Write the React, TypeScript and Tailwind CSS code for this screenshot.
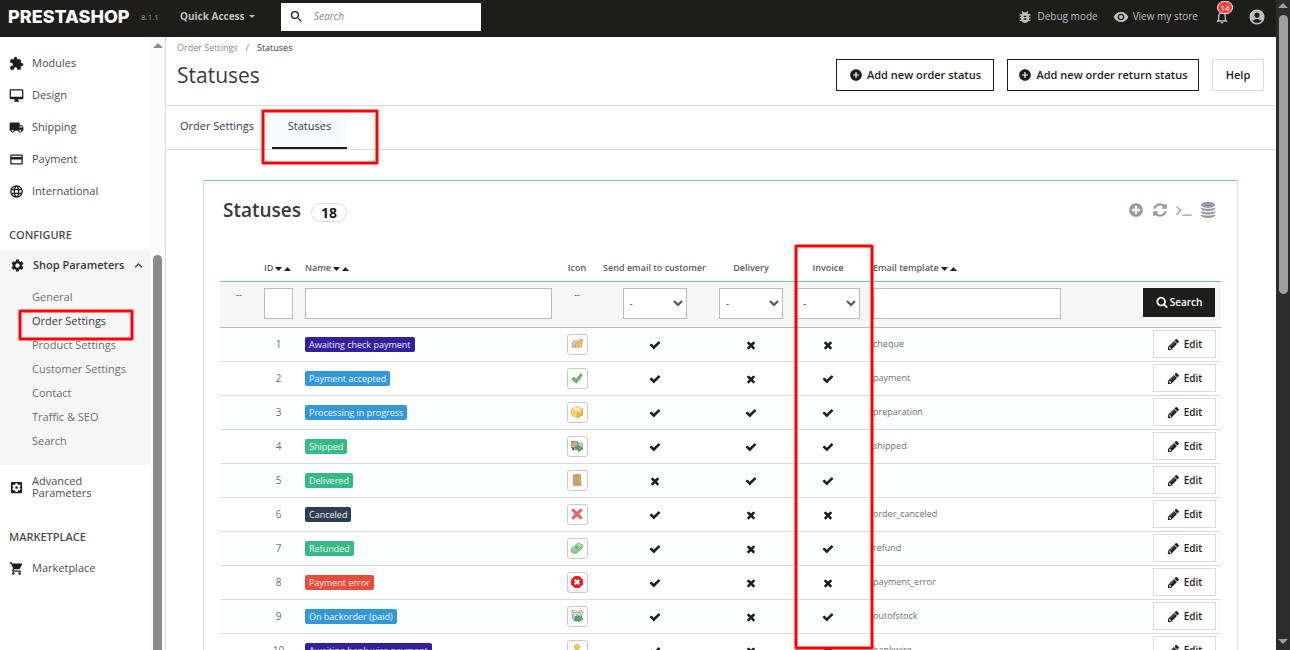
import type { ReactNode } from 'react';
import type { IconType } from 'react-icons';
import {
  MdAccountCircle,
  MdAddCircle,
  MdBugReport,
  MdCreditCard,
  MdExtension,
  MdKeyboardArrowUp,
  MdLanguage,
  MdLocalShipping,
  MdNotificationsNone,
  MdOutlineDesktopMac,
  MdRemoveRedEye,
  MdSearch,
  MdSettings,
  MdSettingsApplications,
  MdShoppingCart,
} from 'react-icons/md';

// ---------------------------------------------------------------------------
// Glyphs used by the legacy list (1792 grid)
// ---------------------------------------------------------------------------
const GLYPHS = {
  check:
    'M1671 566q0 40-28 68l-724 724-136 136q-28 28-68 28t-68-28l-136-136-362-362q-28-28-28-68t28-68l136-136q28-28 68-28t68 28l294 295 656-657q28-28 68-28t68 28l136 136q28 28 28 68z',
  times:
    'M1490 1322q0 40-28 68l-136 136q-28 28-68 28t-68-28l-294-294-294 294q-28 28-68 28t-68-28l-136-136q-28-28-28-68t28-68l294-294-294-294q-28-28-28-68t28-68l136-136q28-28 68-28t68 28l294 294 294-294q28-28 68-28t68 28l136 136q28 28 28 68t-28 68l-294 294 294 294q28 28 28 68z',
  plus:
    'M1344 960v-128q0-26-19-45t-45-19h-256v-256q0-26-19-45t-45-19h-128q-26 0-45 19t-19 45v256h-256q-26 0-45 19t-19 45v128q0 26 19 45t45 19h256v256q0 26 19 45t45 19h128q26 0 45-19t19-45v-256h256q26 0 45-19t19-45zm320-64q0 209-103 385.5t-279.5 279.5-385.5 103-385.5-103-279.5-279.5-103-385.5 103-385.5 279.5-279.5 385.5-103 385.5 103 279.5 279.5 103 385.5z',
  refresh:
    'M1639 1056q0 5-1 7-64 268-268 434.5t-478 166.5q-146 0-282.5-55t-243.5-157l-129 129q-19 19-45 19t-45-19-19-45v-448q0-26 19-45t45-19h448q26 0 45 19t19 45-19 45l-137 137q71 66 161 102t187 36q134 0 250-65t186-179q11-17 53-117 8-23 30-23h192q13 0 22.5 9.5t9.5 22.5zm25-800v448q0 26-19 45t-45 19h-448q-26 0-45-19t-19-45 19-45l138-138q-148-137-349-137-134 0-250 65t-186 179q-11 17-53 117-8 23-30 23h-199q-13 0-22.5-9.5t-9.5-22.5v-7q65-268 270-434.5t480-166.5q146 0 284 55.5t245 156.5l130-129q19-19 45-19t45 19 19 45z',
  terminal:
    'M585 983l-466 466q-10 10-23 10t-23-10l-50-50q-10-10-10-23t10-23l393-393-393-393q-10-10-10-23t10-23l50-50q10-10 23-10t23 10l466 466q10 10 10 23t-10 23zm1176 457v64q0 14-9 23t-23 9h-960q-14 0-23-9t-9-23v-64q0-14 9-23t23-9h960q14 0 23 9t9 23z',
  database:
    'M896 768q237 0 443-43t325-127v170q0 69-103 128t-280 93.5-385 34.5-385-34.5-280-93.5-103-128v-170q119 84 325 127t443 43zm0 768q237 0 443-43t325-127v170q0 69-103 128t-280 93.5-385 34.5-385-34.5-280-93.5-103-128v-170q119 84 325 127t443 43zm0-384q237 0 443-43t325-127v170q0 69-103 128t-280 93.5-385 34.5-385-34.5-280-93.5-103-128v-170q119 84 325 127t443 43zm0-1152q208 0 385 34.5t280 93.5 103 128v128q0 69-103 128t-280 93.5-385 34.5-385-34.5-280-93.5-103-128v-128q0-69 103-128t280-93.5 385-34.5z',
  pencil:
    'M491 1536l91-91-235-235-91 91v107h128v128h107zm523-928q0-22-22-22-10 0-17 7l-542 542q-7 7-7 17 0 22 22 22 10 0 17-7l542-542q7-7 7-17zm-54-192l416 416-832 832h-416v-416zm683 96q0 53-37 90l-166 166-416-416 166-165q36-38 90-38 53 0 91 38l235 234q37 39 37 91z',
  search:
    'M1216 832q0-185-131.5-316.5t-316.5-131.5-316.5 131.5-131.5 316.5 131.5 316.5 316.5 131.5 316.5-131.5 131.5-316.5zm512 832q0 52-38 90t-90 38q-54 0-90-38l-343-342q-179 124-399 124-143 0-273.5-55.5t-225-150-150-225-55.5-273.5 55.5-273.5 150-225 225-150 273.5-55.5 273.5 55.5 225 150 150 225 55.5 273.5q0 220-124 399l343 343q37 37 37 90z',
};

function Glyph({ name, className }: { name: keyof typeof GLYPHS; className: string }) {
  return (
    <svg viewBox="0 0 1792 1792" fill="currentColor" aria-hidden="true" className={className}>
      <path d={GLYPHS[name]} />
    </svg>
  );
}

// ---------------------------------------------------------------------------
// Data
// ---------------------------------------------------------------------------
type MenuItem = { label: string; icon: IconType };

const IMPROVE_MENU: MenuItem[] = [
  { label: 'Modules', icon: MdExtension },
  { label: 'Design', icon: MdOutlineDesktopMac },
  { label: 'Shipping', icon: MdLocalShipping },
  { label: 'Payment', icon: MdCreditCard },
  { label: 'International', icon: MdLanguage },
];

const SHOP_PARAMETERS = [
  'General',
  'Order Settings',
  'Product Settings',
  'Customer Settings',
  'Contact',
  'Traffic & SEO',
  'Search',
];

const BLUE = 'bg-[#3498d8]';
const PURPLE = 'bg-[#34209e]';
const GREEN = 'bg-[#36b985]';

type StatusIcon =
  | 'cheque'
  | 'accepted'
  | 'box'
  | 'truck'
  | 'door'
  | 'cross'
  | 'cash'
  | 'error'
  | 'clock'
  | 'bank';

type Status = {
  id: number;
  name: string;
  color: string;
  icon: StatusIcon;
  email: boolean;
  delivery: boolean;
  invoice: boolean;
  template: string;
};

const STATUSES: Status[] = [
  { id: 1, name: 'Awaiting check payment', color: PURPLE, icon: 'cheque', email: true, delivery: false, invoice: false, template: 'cheque' },
  { id: 2, name: 'Payment accepted', color: BLUE, icon: 'accepted', email: true, delivery: false, invoice: true, template: 'payment' },
  { id: 3, name: 'Processing in progress', color: BLUE, icon: 'box', email: true, delivery: true, invoice: true, template: 'preparation' },
  { id: 4, name: 'Shipped', color: GREEN, icon: 'truck', email: true, delivery: true, invoice: true, template: 'shipped' },
  { id: 5, name: 'Delivered', color: GREEN, icon: 'door', email: false, delivery: true, invoice: true, template: '' },
  { id: 6, name: 'Canceled', color: 'bg-[#2c3e50]', icon: 'cross', email: true, delivery: false, invoice: false, template: 'order_canceled' },
  { id: 7, name: 'Refunded', color: GREEN, icon: 'cash', email: true, delivery: false, invoice: true, template: 'refund' },
  { id: 8, name: 'Payment error', color: 'bg-[#e74c3c]', icon: 'error', email: true, delivery: false, invoice: false, template: 'payment_error' },
  { id: 9, name: 'On backorder (paid)', color: BLUE, icon: 'clock', email: true, delivery: false, invoice: true, template: 'outofstock' },
  { id: 10, name: 'Awaiting bank wire payment', color: PURPLE, icon: 'bank', email: true, delivery: false, invoice: false, template: 'bankwire' },
];

// ---------------------------------------------------------------------------
// Small pieces
// ---------------------------------------------------------------------------
const STATUS_DRAWINGS: Record<StatusIcon, ReactNode> = {
  cheque: (
    <>
      <path d="M3 4h11v8H1z" fill="#d9d9d6" stroke="#8d8d8b" />
      <path d="M3 9h5M4 7h4" stroke="#9fb0c0" />
      <path d="M5 13l1-4 7-8 3 3-7 8z" fill="#f6bf4d" stroke="#c98d33" strokeWidth=".6" />
      <path d="M12.500 2L14 .5l2 2-1 1.500z" fill="#e58a6b" />
    </>
  ),
  accepted: <path d="M1 9l3-2 3 3 6-8 2 2-8 11z" fill="#6fbf63" stroke="#3d9a45" />,
  box: (
    <>
      <path d="M8 0l7.500 4v8L8 16 .5 12V4z" fill="#f2ab35" stroke="#cf9336" strokeWidth=".8" />
      <path d="M8 0l7.500 4L8 8 .5 4z" fill="#fbdf98" />
      <path d="M.5 4L8 8v8L.5 12z" fill="#f9d27c" />
      <path d="M4 2l7.500 4v4" fill="none" stroke="#fff6dc" strokeWidth="1.800" />
    </>
  ),
  truck: (
    <>
      <path d="M0 2h9v8H0z" fill="#e8c8a0" stroke="#8c6a48" />
      <path d="M0 4h9M0 7h9" stroke="#9b7653" />
      <path d="M9 4h5l2 4v3H9z" fill="#bcd6ee" stroke="#5d87b0" />
      <circle cx="3" cy="12" r="1.800" fill="#555" />
      <path d="M6 9h4V7l6 4.500-6 4v-2.500H6z" fill="#5cab4b" stroke="#2f7d2d" strokeWidth=".7" />
    </>
  ),
  door: (
    <>
      <path d="M2 15h13" stroke="#a9a29a" />
      <path d="M3.500 1h9v13.500h-9z" fill="#cf9a5c" stroke="#b9833f" />
      <path d="M5 3h2.500v4H5zM8.500 3H11v4H8.500zM5 9h2.500v4H5zM8.500 9H11v4H8.500z" fill="#d8a970" />
      <circle cx="11.500" cy="8" r="1" fill="#f7e09a" />
    </>
  ),
  cross: (
    <path d="M1 3l2-2 5 4.500L13 1l2 2-4.500 5 4.500 5-2 2-5-4.500L3 15l-2-2 4.500-5z" fill="#f4605f" stroke="#e04848" strokeWidth=".8" />
  ),
  cash: (
    <>
      <path d="M0 9l10-8 6 4-9 8z" fill="#a5d6a0" stroke="#64a865" />
      <path d="M0 10v3l6 3 9-8V6" fill="#8cc78c" stroke="#64a865" />
      <circle cx="8" cy="7" r="2" fill="#6fb771" />
      <path d="M3 9l3 2M10 3l3 2" stroke="#e0f2dc" />
    </>
  ),
  error: (
    <>
      <path d="M5 0h6l5 5v6l-5 5H5l-5-5V5z" fill="#ee1c1c" />
      <path d="M5 5l6 6M11 5l-6 6" stroke="#fff" strokeWidth="3" />
    </>
  ),
  clock: (
    <>
      <path d="M0 5a4 4 0 0 1 6-5zM16 5a4 4 0 0 0-6-5z" fill="#f2b13d" />
      <circle cx="8" cy="8.500" r="6" fill="#e3effa" stroke="#6b9fd2" strokeWidth="1.800" />
      <path d="M8 5v4H5" fill="none" stroke="#666" />
      <path d="M5 9h5V7l6 5-6 4v-2H5z" fill="#5cab4b" stroke="#2f7d2d" strokeWidth=".7" />
    </>
  ),
  bank: (
    <>
      <circle cx="8" cy="4" r="3.500" fill="#f5c94f" stroke="#d9a52e" />
      <path d="M3 16V9h10v7z" fill="#f5d46f" stroke="#d9a52e" />
    </>
  ),
};

function StatusImage({ icon }: { icon: StatusIcon }) {
  return (
    <span className="inline-flex size-[21px] items-center justify-center rounded-[3px] border border-[#c9c9c9] bg-white align-middle">
      <svg viewBox="0 0 16 16" className="size-3" aria-hidden="true">
        {STATUS_DRAWINGS[icon]}
      </svg>
    </span>
  );
}

function Flag({ on }: { on: boolean }) {
  return (
    <span role="img" aria-label={on ? 'Yes' : 'No'} className="inline-flex align-middle text-[#1d1d1b]">
      <Glyph name={on ? 'check' : 'times'} className="size-3" />
    </span>
  );
}

function SortArrows() {
  return (
    <svg viewBox="0 0 16 6" className="ml-0.5 inline h-1.5 w-4 align-middle" fill="#1d1d1b" aria-hidden="true">
      <path d="M0 1h7L3.500 5zM9 5h7l-3.500-4z" />
    </svg>
  );
}

function Marker({ className }: { className: string }) {
  return (
    <span
      aria-hidden="true"
      className={`pointer-events-none absolute z-10 rounded-[1px] border-2 border-[#ff0000] ring-1 ring-[#ff0000]/50 inset-ring-1 inset-ring-[#ff0000]/50 ${className}`}
    />
  );
}

function FilterSelect({ label }: { label: string }) {
  return (
    <select aria-label={label} className="h-[31px] w-16 border border-[#bbb] bg-white pl-0.5 text-[10px] text-[#555]">
      <option>-</option>
      <option>Yes</option>
      <option>No</option>
    </select>
  );
}

function SideLink({ label, icon: Icon }: MenuItem) {
  return (
    <a href="#" className="flex h-8 items-center gap-2 pl-[9px] text-[11px] leading-3 text-[#4d4d4d]">
      <Icon className="size-[15px] shrink-0 text-[#1d1d1b]" />
      <span className="max-w-20">{label}</span>
    </a>
  );
}

function SideHeading({ children }: { children: ReactNode }) {
  return <h2 className="flex h-[29px] items-center pl-[9px] text-[11px] font-semibold text-[#4d4d4d]">{children}</h2>;
}

// ---------------------------------------------------------------------------
// Page sections
// ---------------------------------------------------------------------------
function TopBar() {
  return (
    <header className="flex h-[37px] shrink-0 items-center bg-[#1d1d1b] pr-2.5 pb-1 pl-2 text-[#bebebe]">
      <a href="#" className="w-[133px] font-[Inter] text-[18px] leading-6 font-extrabold text-white">
        PRESTASHOP
      </a>
      <span className="w-[39px] text-[8px] text-[#9a9a9a]">8.1.1</span>
      <button type="button" className="flex w-[101px] items-center gap-1 text-[10px] font-bold">
        Quick Access
        <svg viewBox="0 0 6 3" className="h-[3px] w-1.5" fill="currentColor" aria-hidden="true">
          <path d="M0 0h6L3 3z" />
        </svg>
      </button>
      <label className="flex h-7 w-[200px] items-center gap-2.5 bg-white pl-2 text-[#1d1d1b]">
        <MdSearch className="size-[15px] shrink-0" />
        <input
          type="text"
          aria-label="Search"
          placeholder="Search"
          className="w-full min-w-0 text-[10px] outline-none placeholder:text-[#7a8a90] placeholder:italic"
        />
      </label>
      <nav className="ml-auto flex items-center text-[10px]">
        <a href="#" className="mr-[15px] flex items-center gap-1">
          <MdBugReport className="size-4" />
          Debug mode
        </a>
        <a href="#" className="mr-4 flex items-center gap-1">
          <MdRemoveRedEye className="size-4" />
          View my store
        </a>
        <button type="button" aria-label="Notifications" className="relative mr-[18px]">
          <MdNotificationsNone className="size-4" />
          <span className="absolute -top-2 left-[3px] flex h-[13px] w-4 items-center justify-center rounded-full border border-white bg-[#f9423a] text-[8px] leading-[11px] text-white">
            14
          </span>
        </button>
        <button type="button" aria-label="Account">
          <MdAccountCircle className="size-[18px]" />
        </button>
      </nav>
    </header>
  );
}

function Sidebar() {
  return (
    <div className="flex w-[166px] shrink-0 border-r border-[#dcdcdc]">
      <nav className="min-w-0 flex-1 pt-2.5">
        {IMPROVE_MENU.map((item) => (
          <SideLink key={item.label} {...item} />
        ))}

        <div className="mt-3.5">
          <SideHeading>CONFIGURE</SideHeading>
        </div>
        <div className="bg-[#f6f6f6] pb-3">
          <a href="#" className="flex h-[35px] items-center pr-1 pb-1 pl-2.5 text-[11px] font-semibold text-[#363636]">
            <MdSettings className="mr-2 size-[15px] text-[#1d1d1b]" />
            Shop Parameters
            <MdKeyboardArrowUp className="ml-auto size-[15px]" />
          </a>
          <ul>
            {SHOP_PARAMETERS.map((label) => (
              <li key={label} className="relative flex h-6 items-center pl-8 text-[11px] text-[#6f6f6f]">
                <a href="#" className={label === 'Order Settings' ? 'text-[#363a41]' : ''}>
                  {label}
                </a>
                {label === 'Order Settings' && <Marker className="top-px left-[19px] h-[30px] w-[114px]" />}
              </li>
            ))}
          </ul>
        </div>

        <div className="mt-1.5">
          <SideLink label="Advanced Parameters" icon={MdSettingsApplications} />
        </div>
        <div className="mt-5">
          <SideHeading>MARKETPLACE</SideHeading>
        </div>
        <SideLink label="Marketplace" icon={MdShoppingCart} />
      </nav>

      <div className="flex w-[15px] flex-col items-center bg-[#fcfcfc] pt-1.5" aria-hidden="true">
        <svg viewBox="0 0 10 5" className="h-[5px] w-2.5" fill="#8b8b8b">
          <path d="M5 0l5 5H0z" />
        </svg>
        <div className="mt-[207px] w-[9px] flex-1 rounded-t-full bg-[#8b8b8b]" />
      </div>
    </div>
  );
}

function PageHead() {
  return (
    <>
      <div className="flex h-[69px] justify-between border-b border-[#dcdcdc] pr-3 pl-[11px]">
        <div>
          <nav aria-label="Breadcrumb" className="flex gap-2 pt-1 text-[9px] leading-[14px]">
            <a href="#" className="text-[#8b8b8b]">
              Order Settings
            </a>
            <span className="text-[#7d8a5c]">/</span>
            <span className="text-[#363a41]">Statuses</span>
          </nav>
          <h1 className="mt-1.5 text-[21px] leading-7 text-[#363a41]">Statuses</h1>
        </div>
        <div className="flex gap-[13px] pt-[22px] text-[11px] font-semibold text-[#1d1d1b]">
          <button type="button" className="flex h-8 w-[158px] items-center justify-center gap-1 border border-[#1d1d1b] whitespace-nowrap">
            <MdAddCircle className="size-[14px]" />
            Add new order status
          </button>
          <button type="button" className="flex h-8 w-48 items-center justify-center gap-1 border border-[#1d1d1b] whitespace-nowrap">
            <MdAddCircle className="size-[14px]" />
            Add new order return status
          </button>
          <button type="button" className="h-8 w-[52px] border border-[#dcdcdc]">
            Help
          </button>
        </div>
      </div>
      <nav className="flex h-11 border-b border-[#dcdcdc] text-[11px] text-[#363a41]">
        <a href="#" className="flex w-[106px] items-center justify-center pr-1 pb-0.5">
          Order Settings
        </a>
        <div className="relative">
          <a href="#" className="flex h-[43px] w-[75px] items-center justify-center border-b-2 border-[#1d1d1b] bg-[#f6fcfd]">
            Statuses
          </a>
          <Marker className="top-1 -left-2.5 h-[54px] w-[116px]" />
        </div>
      </nav>
    </>
  );
}

function StatusTable() {
  const input = 'block h-[31px] w-full border border-[#bbb] bg-white px-1 text-[10px]';

  return (
    <table className="w-full table-fixed border-collapse text-center text-[9px] text-[#6f7073]">
      <colgroup>
        <col className="w-[38px]" />
        <col className="w-[41px]" />
        <col className="w-[259px]" />
        <col className="w-[38px]" />
        <col className="w-[117px]" />
        <col className="w-[76px]" />
        <col className="w-[78px]" />
        <col />
        <col className="w-[154px]" />
      </colgroup>
      <thead>
        <tr className="h-7 border-b border-[#79bfd5] whitespace-nowrap text-[#5a5c60] [&>th]:pt-0.5 [&>th]:font-semibold">
          <th />
          <th className="pl-1.5 text-left">
            ID
            <SortArrows />
          </th>
          <th className="pl-1.5 text-left">
            Name
            <SortArrows />
          </th>
          <th>Icon</th>
          <th>Send email to customer</th>
          <th>Delivery</th>
          <th className="relative">
            Invoice
            <Marker className="-top-2 left-1.5 h-[404px] w-[78px]" />
          </th>
          <th className="pl-1.5 text-left">
            Email template
            <SortArrows />
          </th>
          <th />
        </tr>
        <tr className="h-[46px] border-b border-[#bbb] bg-[#f6f6f6] align-top [&>td]:pt-1.5">
          <td className="text-[#363a41]">--</td>
          <td className="px-1.5">
            <input aria-label="Filter by ID" className={input} />
          </td>
          <td className="px-1.5">
            <input aria-label="Filter by name" className={input} />
          </td>
          <td className="text-[#363a41]">--</td>
          <td>
            <FilterSelect label="Send email to customer" />
          </td>
          <td>
            <FilterSelect label="Delivery" />
          </td>
          <td>
            <FilterSelect label="Invoice" />
          </td>
          <td className="px-1.5">
            <input aria-label="Filter by email template" className={input} />
          </td>
          <td className="pr-1.5 text-right">
            <button type="button" className="inline-flex h-[29px] w-[72px] items-center justify-center gap-0.5 bg-[#1d1d1b] text-[10px] font-semibold text-white">
              <Glyph name="search" className="size-3" />
              Search
            </button>
          </td>
        </tr>
      </thead>
      <tbody>
        {STATUSES.map((status) => (
          <tr key={status.id} className="h-[34px] border-b border-[#dcdcdc] odd:bg-[#fbfdfe]">
            <td />
            <td className="text-[10px]">{status.id}</td>
            <td className="pl-1.5 text-left">
              <span className={`inline-block rounded-[2px] px-1 leading-[15px] text-white/90 ${status.color}`}>{status.name}</span>
            </td>
            <td>
              <StatusImage icon={status.icon} />
            </td>
            <td>
              <Flag on={status.email} />
            </td>
            <td>
              <Flag on={status.delivery} />
            </td>
            <td>
              <Flag on={status.invoice} />
            </td>
            <td className="pl-1.5 text-left">{status.template}</td>
            <td className="pr-[5px] text-right">
              <button type="button" className="inline-flex h-7 w-[63px] items-center justify-center gap-1 border border-[#dcdcdc] bg-white align-middle text-[10px] font-semibold text-[#1d1d1b]">
                <Glyph name="pencil" className="size-[13px]" />
                Edit
              </button>
            </td>
          </tr>
        ))}
      </tbody>
    </table>
  );
}

export default function App() {
  return (
    <div className="flex h-screen overflow-hidden bg-white font-['Open_Sans','Noto_Sans',sans-serif]">
      <div className="flex min-w-0 flex-1 flex-col">
        <TopBar />
        <div className="flex min-h-0 flex-1">
          <Sidebar />
          <main className="min-w-0 flex-1 overflow-hidden">
            <PageHead />
            <section className="mt-[30px] mr-[38px] ml-[37px] border border-t-[#79bfd5] border-r-[#dcdcdc] border-b-[#dcdcdc] border-l-[#dcdcdc] px-4">
              <div className="flex h-[72px] items-start justify-between pt-[15px]">
                <div className="flex items-center gap-2.5 pl-[3px]">
                  <h2 className="text-[19px] leading-7 font-semibold text-[#363a41]">Statuses</h2>
                  <span className="mt-1 flex h-[19px] w-9 items-center justify-center rounded-full border border-[#dcdcdc] text-[14px] font-bold text-[#1d1d1b]">
                    18
                  </span>
                </div>
                <div className="flex gap-2 pt-1.5 pr-[5px] text-[#969ba5]">
                  <button type="button" aria-label="Add new">
                    <Glyph name="plus" className="size-4" />
                  </button>
                  <button type="button" aria-label="Refresh list">
                    <Glyph name="refresh" className="size-4" />
                  </button>
                  <button type="button" aria-label="Show SQL query">
                    <Glyph name="terminal" className="size-4" />
                  </button>
                  <button type="button" aria-label="Export to SQL Manager">
                    <Glyph name="database" className="size-4" />
                  </button>
                </div>
              </div>
              <StatusTable />
            </section>
          </main>
        </div>
      </div>

      {/* Window scrollbar */}
      <div className="flex w-[14px] shrink-0 flex-col items-center bg-[#2c2c2c] pt-[3px] pb-1.5" aria-hidden="true">
        <svg viewBox="0 0 10 5" className="h-[5px] w-2.5" fill="#9f9f9f">
          <path d="M5 0l5 5H0z" />
        </svg>
        <div className="mt-[7px] h-[279px] w-[9px] rounded-full bg-[#9f9f9f]" />
        <svg viewBox="0 0 10 5" className="mt-auto h-[5px] w-2.5" fill="#9f9f9f">
          <path d="M0 0h10L5 5z" />
        </svg>
      </div>
    </div>
  );
}
